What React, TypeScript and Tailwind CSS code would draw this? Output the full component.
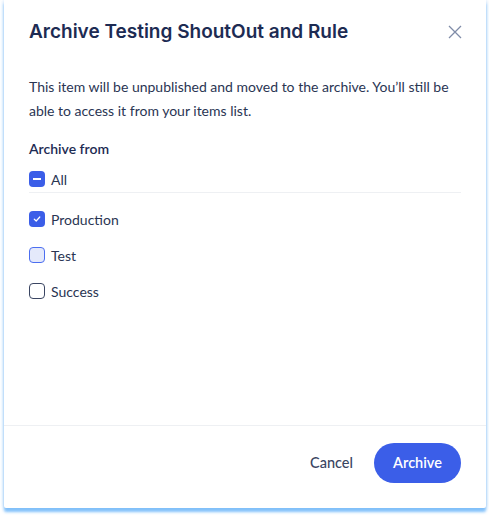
import { useState } from "react";

type Mark = "checked" | "indeterminate" | "hover" | "empty";

const Box = ({ mark }: { mark: Mark }) => {
  if (mark === "checked" || mark === "indeterminate") {
    return (
      <span className="flex h-4 w-4 items-center justify-center rounded-[4px] bg-[#3b5ee8]">
        {mark === "checked" ? (
          <svg width="10" height="10" viewBox="0 0 10 10" fill="none">
            <path d="M2.3 5.2 4.2 7 7.8 3" stroke="white" strokeWidth="1.2" strokeLinecap="round" strokeLinejoin="round" />
          </svg>
        ) : (
          <span className="h-[1.5px] w-2 bg-white" />
        )}
      </span>
    );
  }
  if (mark === "hover") {
    return <span className="h-4 w-4 rounded-[4px] border border-[#4c6ef0] bg-[#e4e9fb]" />;
  }
  return <span className="h-4 w-4 rounded-[4px] border border-[#3a4562] bg-white" />;
};

const Row = ({ label, mark }: { label: string; mark: Mark }) => (
  <label className="flex h-5 items-center gap-[6px] text-[14px] text-[#2a3553]">
    <Box mark={mark} />
    <span>{label}</span>
  </label>
);

export default function App() {
  const [open] = useState(true);

  return (
    <div className="h-[517px] w-[489px] bg-white font-['Lato',sans-serif]">
      {open && (
        <div className="ml-[4px] flex h-[508px] w-[482px] flex-col rounded-b-[2px] bg-white shadow-[0_0_4px_rgba(120,180,245,0.45),0_4px_3px_rgba(110,185,250,0.85)]">
          {/* header */}
          <div className="flex items-center justify-between pl-[25px] pr-[24px] pt-[20px]">
            <h2 className="font-['Inter',sans-serif] text-[19px] font-semibold leading-6 text-[#1d2b53]">
              Archive Testing ShoutOut and Rule
            </h2>
            <button className="text-[#7f8ca8]">
              <svg width="14" height="14" viewBox="0 0 14 14" fill="none">
                <path d="M1 1 13 13M13 1 1 13" stroke="currentColor" strokeWidth="1.3" />
              </svg>
            </button>
          </div>

          {/* body */}
          <div className="flex-1 px-[25px]">
            <p className="mt-[31px] text-[14px] leading-6 text-[#2a3553]">
              This item will be unpublished and moved to the archive. You’ll still be able to access it from your items list.
            </p>

            <p className="mt-[16px] text-[14px] font-semibold leading-5 text-[#1d2b53]">Archive from</p>

            <div className="mt-[10px] border-b border-[#eef0f3] pb-[3px]">
              <Row label="All" mark="indeterminate" />
            </div>

            <div className="mt-[16px] flex flex-col gap-4">
              <Row label="Production" mark="checked" />
              <Row label="Test" mark="hover" />
              <Row label="Success" mark="empty" />
            </div>
          </div>

          {/* footer */}
          <div className="flex h-[83px] items-start justify-end gap-[12px] border-t border-[#eef0f3] pr-[25px] pt-[17px]">
            <button className="h-10 px-[9px] text-[14.5px] font-medium text-[#3a4562]">Cancel</button>
            <button className="h-10 w-[87px] rounded-full bg-[#3b5ee8] text-[14.5px] font-semibold text-white">
              Archive
            </button>
          </div>
        </div>
      )}
    </div>
  );
}
